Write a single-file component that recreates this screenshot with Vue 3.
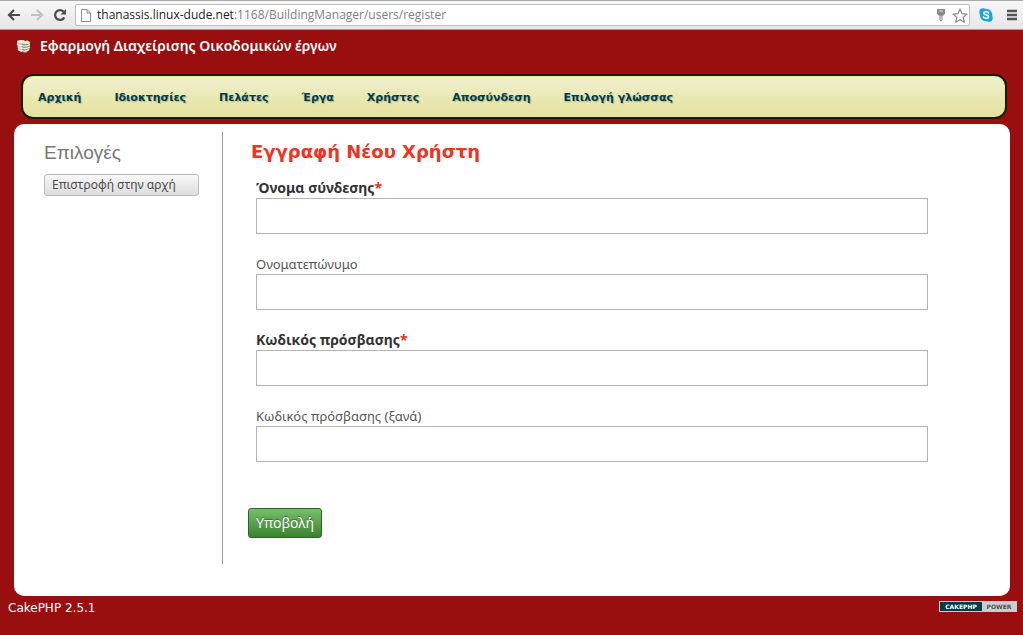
<script setup>
import { ref } from 'vue'

const address = ref({ host: 'thanassis.linux-dude.net', path: ':1168/BuildingManager/users/register' })
const menu = ['Αρχική', 'Ιδιοκτησίες', 'Πελάτες', 'Έργα', 'Χρήστες', 'Αποσύνδεση', 'Επιλογή γλώσσας']
const fields = ref([
  { id: 'username', label: 'Όνομα σύνδεσης', type: 'text', required: true, value: '' },
  { id: 'fullname', label: 'Ονοματεπώνυμο', type: 'text', required: false, value: '' },
  { id: 'password', label: 'Κωδικός πρόσβασης', type: 'password', required: true, value: '' },
  { id: 'password-again', label: 'Κωδικός πρόσβασης (ξανά)', type: 'password', required: false, value: '' },
])
</script>

<template>
  <div class="browser">
    <div class="toolbar">
      <button class="tool" type="button" aria-label="Back">
        <svg width="14" height="14" viewBox="0 0 14 14"><path d="M13 7H2.5M7 2L2 7l5 5" fill="none" stroke="#4c4c4c" stroke-width="2.2" /></svg>
      </button>
      <button class="tool" type="button" aria-label="Forward">
        <svg width="14" height="14" viewBox="0 0 14 14"><path d="M1 7h10.500M7 2l5 5-5 5" fill="none" stroke="#c2c2c2" stroke-width="2.200" /></svg>
      </button>
      <button class="tool" type="button" aria-label="Reload">
        <svg width="14" height="14" viewBox="0 0 14 14"><path d="M11.300 9.400A4.900 4.900 0 1 1 10.600 3.700" fill="none" stroke="#4c4c4c" stroke-width="2.300" /><path d="M13 1v5.500H7.500z" fill="#4c4c4c" /></svg>
      </button>
      <div class="address">
        <svg width="10" height="13" viewBox="0 0 10 13"><path d="M.5.5h5.500l3.500 3.500v8.500h-9zM6 .5v3.500h3.500" fill="#fff" stroke="#8c8c8c" /></svg>
        <span class="url">{{ address.host }}<span class="path">{{ address.path }}</span></span>
        <svg width="10" height="14" viewBox="0 0 10 14"><path d="M1 1h8v5l-1.500 1.500H6.500V12L5 13.500 3.500 12V7.500h-1L1 6z" fill="#8b8b8b" /><path d="M3 3h4M5 8v4" stroke="#e4e4e4" /></svg>
        <svg width="16" height="15" viewBox="0 0 16 15"><path d="M8 1l2 4.600 5 .5-3.800 3.300 1.100 4.900L8 11.700l-4.300 2.600 1.100-4.900L1 6.100l5-.5z" fill="#fff" stroke="#858585" stroke-width="1.200" stroke-linejoin="round" /></svg>
      </div>
      <button class="tool" type="button" aria-label="Skype">
        <svg width="14" height="14" viewBox="0 0 14 14"><circle cx="7" cy="7" r="6.200" fill="#12a5e6" /><circle cx="4" cy="4" r="3.700" fill="#12a5e6" /><circle cx="10" cy="10" r="3.700" fill="#12a5e6" /><path d="M9.600 4.800C9 3.300 4.800 3.200 4.800 5.200c0 2 4.800 1.300 4.800 3.500 0 2.100-4.500 2-5.200.3" fill="none" stroke="#fff" stroke-width="1.700" stroke-linecap="round" /></svg>
      </button>
      <button class="tool menu-button" type="button" aria-label="Menu">
        <svg width="12" height="12" viewBox="0 0 12 12"><path d="M1 2h10M1 6h10M1 10h10" stroke="#555" stroke-width="2.400" /></svg>
      </button>
    </div>

    <header class="title">
      <svg width="16" height="14" viewBox="0 0 16 14">
        <path d="M1 3l5-2 3 1v9l-3 2-4-2z" fill="#c9c9b4" />
        <path d="M6 4l5-3 3 2v7l-4 4-4-1z" fill="#8f9782" />
        <ellipse cx="5" cy="2.500" rx="4" ry="1.500" fill="#f4f3e4" />
        <ellipse cx="10" cy="3.500" rx="4" ry="1.600" fill="#e8e8d2" />
        <path d="M1 5q2 2 5 1.500M2 8q2 1.500 4 1.300M2 10.500q2 1.500 4 1.500" fill="none" stroke="#fff" stroke-width="1.400" />
        <path d="M6 6.500q4 1.500 8-1M6 9q4 1.500 8-1M6 11.500q4 1.500 7-1" fill="none" stroke="#f1f0dc" stroke-width="1.200" />
      </svg>
      <a href="#">Εφαρμογή Διαχείρισης Οικοδομικών έργων</a>
    </header>

    <nav class="menu">
      <a v-for="item in menu" :key="item" href="#">{{ item }}</a>
    </nav>

    <main class="panel">
      <aside class="side">
        <h3>Επιλογές</h3>
        <a class="action" href="#">Επιστροφή στην αρχή</a>
      </aside>
      <form class="form" @submit.prevent>
        <h2>Εγγραφή Νέου Χρήστη</h2>
        <div v-for="field in fields" :key="field.id" class="field">
          <label :for="field.id" :class="{ required: field.required }">{{ field.label }}</label>
          <input :id="field.id" v-model="field.value" :type="field.type">
        </div>
        <button class="submit" type="submit">Υποβολή</button>
      </form>
    </main>

    <footer class="footer">
      <span>CakePHP 2.5.1</span>
      <a class="badge" href="#"><span class="cake">CAKEPHP</span><span class="power">POWER</span></a>
    </footer>
  </div>
</template>

<style>
body {
  background: #990e0e;
}
</style>

<style scoped>
.browser {
  min-height: 100vh;
  background: #990e0e;
  font-family: "Noto Sans", "Open Sans", sans-serif;
}
a {
  color: inherit;
  text-decoration: none;
}
.toolbar {
  display: flex;
  align-items: center;
  gap: 9px;
  height: 30px;
  box-sizing: border-box;
  padding: 1px 5px 1px 7px;
  background: linear-gradient(#f7f7f7, #e6e6e6);
  border-top: 1px solid #aaa;
  border-bottom: 1px solid #a99;
}
.tool {
  display: flex;
  padding: 0;
  border: 0;
  background: none;
}
.menu-button {
  margin-left: 4px;
}
.address {
  flex: 1;
  display: flex;
  align-items: center;
  gap: 6px;
  height: 22px;
  box-sizing: border-box;
  margin-left: -1px;
  padding: 0 1px 0 5px;
  background: #fff;
  border: 1px solid #bdbdbd;
  border-radius: 2px;
}
.url {
  flex: 1;
  font: 12px/18px "Open Sans", "Noto Sans", sans-serif;
  color: #222;
}
.path {
  color: #808080;
}
.title {
  display: flex;
  align-items: center;
  gap: 8px;
  height: 32px;
  padding-left: 16px;
  color: #fff;
  font-size: 14px;
  font-weight: 600;
  line-height: 18px;
}
.menu {
  display: flex;
  align-items: center;
  gap: 33px;
  height: 45px;
  box-sizing: border-box;
  margin: 12px 16px 5px 21px;
  padding: 2px 15px 0;
  background: linear-gradient(#f0f0cf, #e5e19b);
  border: 2px solid #171c08;
  border-radius: 12px;
  box-shadow: inset 0 0 0 1px #dcec9c;
  color: #003d4c;
  font: bold 11px/16px "DejaVu Sans", Verdana, sans-serif;
  text-shadow: 1px 1px 1px #a9b48e;
}
.panel {
  display: flex;
  box-sizing: border-box;
  min-height: 472px;
  margin: 0 13px 0 14px;
  padding: 8px 0 32px;
  background: #fff;
  border-radius: 10px;
}
.side {
  width: 209px;
  box-sizing: border-box;
  padding: 8px 23px 0 30px;
  border-right: 1px solid #999;
}
h3 {
  margin: 0 0 9px;
  color: #777;
  font: 19px/25px "Liberation Sans", Arial, sans-serif;
}
.action {
  display: block;
  padding: 0 7px;
  border: 1px solid #bbb;
  border-radius: 3px;
  background: linear-gradient(#f8f8f8, #dcdcdc);
  color: #4c4c4c;
  font-size: 12px;
  line-height: 20px;
}
.form {
  flex: 1;
  padding: 8px 82px 0 25px;
}
h2 {
  margin: 0 0 14px 3px;
  color: #e32;
  font: bold 18px/24px "DejaVu Sans", Verdana, sans-serif;
}
.field {
  display: flex;
  flex-direction: column;
  margin: 0 0 20px 8px;
}
label {
  height: 20px;
  color: #555;
  font-size: 13px;
  line-height: 20px;
}
label.required {
  color: #333;
  font-size: 14px;
  font-weight: bold;
}
label.required::after {
  content: "*";
  color: #e32;
}
input {
  box-sizing: border-box;
  width: 100%;
  height: 36px;
  padding: 4px 8px;
  border: 1px solid #b4b4b4;
  background: #fff;
  font-size: 16px;
}
.submit {
  margin-top: 26px;
  padding: 0 7px;
  border: 1px solid #2d6324;
  border-radius: 3px;
  background: linear-gradient(#76bf6b, #3b8230);
  color: #fff;
  font: 14px/28px "Noto Sans", "Open Sans", sans-serif;
  text-shadow: 0 -1px 1px #396d30;
}
.footer {
  display: flex;
  align-items: flex-start;
  justify-content: space-between;
  padding: 4px 6px 0 8px;
  color: #fff;
  font: 12px/16px "DejaVu Sans", Verdana, sans-serif;
}
.badge {
  display: flex;
  margin-top: 1px;
  border: 1px solid #ccc;
  background: #ccc;
  font: bold 6px/9px "DejaVu Sans", Verdana, sans-serif;
}
.badge span {
  width: 34px;
  text-align: center;
}
.badge .cake {
  width: 42px;
  background: #003d4c;
  color: #fff;
}
.badge .power {
  color: #455;
}
</style>
